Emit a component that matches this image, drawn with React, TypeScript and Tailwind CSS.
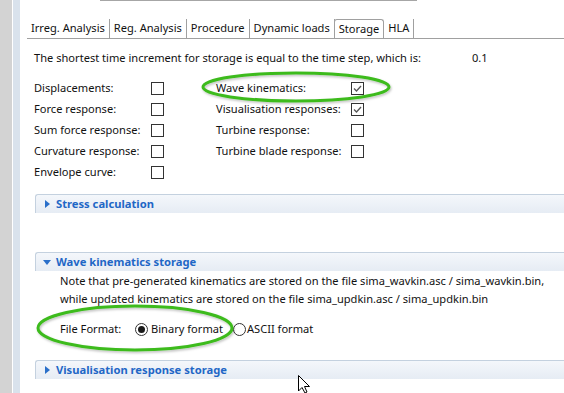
import React from "react";

const font = { fontFamily: '"Noto Sans", "Open Sans", sans-serif' };

function Check({ checked }: { checked?: boolean }) {
  return (
    <div className="w-[13px] h-[13px] border border-[#333333] bg-white flex items-center justify-center">
      {checked && (
        <svg width="11" height="11" viewBox="0 0 11 11">
          <path d="M2 5.5 L4.5 8 L9 3" fill="none" stroke="#555" strokeWidth="1.3" />
        </svg>
      )}
    </div>
  );
}

function Radio({ checked }: { checked?: boolean }) {
  return (
    <div className="w-[13px] h-[13px] rounded-full border border-[#333333] bg-white flex items-center justify-center">
      {checked && <div className="w-[7px] h-[7px] rounded-full bg-[#1a1a1a]" />}
    </div>
  );
}

function SectionHeader({ title, open }: { title: string; open?: boolean }) {
  return (
    <div className="ml-[15px] h-[19px] border-t border-l border-[#c4d1df] rounded-tl-[3px] bg-gradient-to-b from-[#f4f7fb] to-[#e6ecf4] flex items-center">
      <div className="w-[20px] flex items-center justify-center pl-[2px]">
        {open ? (
          <svg width="8" height="5" viewBox="0 0 8 5">
            <path d="M0 0 L8 0 L4 5 Z" fill="#2a6fc9" />
          </svg>
        ) : (
          <svg width="5" height="8" viewBox="0 0 5 8">
            <path d="M0 0 L5 4 L0 8 Z" fill="#2a6fc9" />
          </svg>
        )}
      </div>
      <span className="text-[11.2px] font-bold text-[#1f67c6] leading-none whitespace-nowrap">{title}</span>
    </div>
  );
}

export default function App() {
  const tabs = ["Irreg. Analysis", "Reg. Analysis", "Procedure", "Dynamic loads"];
  return (
    <div className="w-[564px] h-[393px] overflow-hidden bg-white flex relative text-[#111] text-[11.1px] whitespace-nowrap" style={font}>
      <div className="w-[12px] shrink-0 bg-[#d3d3d3]" />
      <div className="w-[1px] shrink-0 bg-white" />
      <div className="w-[7px] shrink-0 bg-[#d9e2ec]" />
      <div className="flex-1 flex flex-col min-w-0">
        <div className="h-[1px] ml-[80px] w-[317px] bg-[#a6a6a6]" />
        <div className="mt-[18px] ml-[7px] h-[20px] border-b border-[#a0a0a0] flex items-stretch leading-none">
          {tabs.map((t) => (
            <div key={t} className="px-[4px] border-r border-[#a0a0a0] flex items-center pb-[1px]">
              {t}
            </div>
          ))}
          <div className="px-[4px] border-t border-x border-[#a0a0a0] rounded-t-[3px] flex items-center pb-[1px] -ml-[1px] bg-white">
            Storage
          </div>
          <div className="px-[4px] border-r border-[#a0a0a0] flex items-center pb-[1px]">HLA</div>
        </div>
        <div className="mt-[11px] ml-[14px] h-[16px] flex items-center">
          <span className="w-[438px]">The shortest time increment for storage is equal to the time step, which is:</span>
          <span>0.1</span>
        </div>
        <div className="ml-[14px] mt-[12px] grid grid-cols-[117px_13px_52px_135px_13px]">
          {[
            ["Displacements:", false, "Wave kinematics:", true],
            ["Force response:", false, "Visualisation responses:", true],
            ["Sum force response:", false, "Turbine response:", false],
            ["Curvature response:", false, "Turbine blade response:", false],
            ["Envelope curve:", false, "", null],
          ].map(([a, ac, b, bc], i) => (
            <React.Fragment key={i}>
              <div className="h-[21px] flex items-center">{a as string}</div>
              <div className="h-[21px] flex items-center"><Check checked={ac as boolean} /></div>
              <div />
              <div className="h-[21px] flex items-center">{b as string}</div>
              <div className="h-[21px] flex items-center">{bc !== null && <Check checked={bc as boolean} />}</div>
            </React.Fragment>
          ))}
        </div>
        <div className="mt-[11px]">
          <SectionHeader title="Stress calculation" />
        </div>
        <div className="mt-[39px]">
          <SectionHeader title="Wave kinematics storage" open />
        </div>
        <div className="ml-[40px] leading-[18px] mt-[1px]">
          <div>Note that pre-generated kinematics are stored on the file sima_wavkin.asc / sima_wavkin.bin,</div>
          <div>while updated kinematics are stored on the file sima_updkin.asc / sima_updkin.bin</div>
        </div>
        <div className="ml-[40px] mt-[11px] h-[20px] flex items-center">
          <span className="w-[75px]">File Format:</span>
          <Radio checked />
          <span className="ml-[3px] w-[82px]">Binary format</span>
          <Radio />
          <span className="ml-[1px]">ASCII format</span>
        </div>
        <div className="mt-[21px]">
          <SectionHeader title="Visualisation response storage" />
        </div>
      </div>
      <svg className="absolute left-0 top-0 pointer-events-none" width="564" height="393">
        <defs>
          <filter id="sh" x="-10%" y="-30%" width="120%" height="160%">
            <feDropShadow dx="1" dy="1.5" stdDeviation="1" floodColor="#000" floodOpacity="0.25" />
          </filter>
        </defs>
        <ellipse cx="296" cy="87" rx="93" ry="14" fill="none" stroke="#3dbb1f" strokeWidth="3" filter="url(#sh)" />
        <ellipse cx="135" cy="328" rx="97" ry="22" fill="none" stroke="#3dbb1f" strokeWidth="3" filter="url(#sh)" />
        <path d="M298.5 375.5 L298.5 391 L302 387.5 L305 393 L307 392 L304.5 386.5 L309.5 386.5 Z" fill="#fff" stroke="#000" strokeWidth="1" />
      </svg>
    </div>
  );
}
